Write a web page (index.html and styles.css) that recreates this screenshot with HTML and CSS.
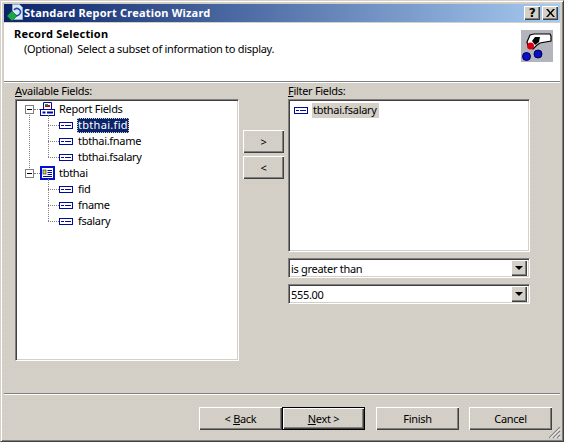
FILE: index.html
```html
<!DOCTYPE html>
<html lang="en">
<head>
<meta charset="utf-8">
<title>Standard Report Creation Wizard</title>
<link rel="stylesheet" href="styles.css">
</head>
<body>
<svg class="defs" width="0" height="0" aria-hidden="true">
  <symbol id="field" viewBox="0 0 14 7">
    <rect x="0" y="0" width="14" height="7" fill="#000a9c"/>
    <rect x="1" y="1" width="12" height="5" fill="#fff"/>
    <rect x="2" y="3" width="3" height="1" fill="#000a9c"/>
    <rect x="6" y="3" width="6" height="1" fill="#000a9c"/>
  </symbol>
</svg>
<div class="window">
  <div class="titlebar">
    <svg class="app-icon" width="18" height="18" viewBox="0 0 18 18">
      <path d="M6.500.5h7l3 3v12h-10z" fill="#dce8f8" stroke="#90a8c8"/>
      <path d="M8 6a3.500 3.500 0 1 1 1 5" fill="none" stroke="#1848a8" stroke-width="1.500"/>
      <path d="M1 12l5-5 5 5-5 5z" fill="#18a848" stroke="#0a6028" stroke-width=".6"/>
    </svg>
    <span class="title-text">Standard Report Creation Wizard</span>
    <span class="caption-btn help">?</span>
    <span class="caption-btn close">
      <svg width="9" height="8" viewBox="0 0 9 8"><path d="M0 0h2l2.500 3L7 0h2L5.500 4 9 8H7L4.500 5 2 8H0l3.500-4z" fill="#000"/></svg>
    </span>
  </div>
  <div class="header">
    <div class="header-text">
      <h1>Record Selection</h1>
      <p>(Optional)&nbsp; Select a subset of information to display.</p>
    </div>
    <svg class="wizard-icon" width="32" height="32" viewBox="0 0 32 32">
      <rect width="32" height="32" fill="#b4b4bc"/>
      <path d="M6 12l3-7 4-1h16l1 2v5l-11 2-3 2-4 4-5-3z" fill="#fff" stroke="#000" stroke-width="1.200"/>
      <path d="M11 11l3-4h5l-1 5-4 3z" fill="#000"/>
      <circle cx="9.500" cy="16" r="3.500" fill="#d80010"/>
      <circle cx="5.500" cy="26.500" r="4" fill="#0810c8" stroke="#000050"/>
      <circle cx="17" cy="24" r="4" fill="#0810c8" stroke="#000050"/>
    </svg>
  </div>
  <div class="rule"></div>
  <div class="main">
    <section class="col-left">
      <label class="field-label"><u>A</u>vailable Fields:</label>
      <div class="sunken tree">
        <div class="node">
          <div class="row root"><span class="exp"></span><span class="stub"></span>
            <svg class="root-icon" width="15" height="14" viewBox="0 0 15 14">
              <path d="M3.500.5h8v7h-8z" fill="#fff" stroke="#000a9c"/>
              <path d="M5 3h5v2H5z" fill="#d00010"/><path d="M5 2h3v1.500H5z" fill="#18a040"/>
              <rect x=".5" y="7.500" width="14" height="6" fill="#fff" stroke="#000a9c"/>
              <rect x="2.500" y="9.500" width="3" height="2" fill="#000a9c"/><rect x="7" y="9.500" width="6" height="2" fill="#000a9c"/>
            </svg>
            <span class="txt">Report Fields</span></div>
          <div class="kids">
            <div class="row"><span class="elbow"></span><svg class="fld"><use href="#field"/></svg><span class="txt sel">tbthai.fid</span></div>
            <div class="row"><span class="elbow"></span><svg class="fld"><use href="#field"/></svg><span class="txt">tbthai.fname</span></div>
            <div class="row"><span class="elbow"></span><svg class="fld"><use href="#field"/></svg><span class="txt">tbthai.fsalary</span></div>
          </div>
        </div>
        <div class="node">
          <div class="row root"><span class="exp"></span><span class="stub"></span>
            <svg class="root-icon" width="15" height="14" viewBox="0 0 15 14">
              <rect x="1" y="1" width="13" height="12" fill="#fff" stroke="#0010d0" stroke-width="2"/>
              <rect x="3" y="4" width="3" height="4" fill="#f0d800" stroke="#000a9c" stroke-width=".6"/>
              <path d="M7.500 4.500h4.500M7.500 6.500h4.500M7.500 8.500h4.500M3 10.500h9" stroke="#000a9c"/>
            </svg>
            <span class="txt">tbthai</span></div>
          <div class="kids">
            <div class="row"><span class="elbow"></span><svg class="fld"><use href="#field"/></svg><span class="txt">fid</span></div>
            <div class="row"><span class="elbow"></span><svg class="fld"><use href="#field"/></svg><span class="txt">fname</span></div>
            <div class="row"><span class="elbow"></span><svg class="fld"><use href="#field"/></svg><span class="txt">fsalary</span></div>
          </div>
        </div>
      </div>
    </section>
    <div class="col-mid">
      <button class="btn move" type="button">&gt;</button>
      <button class="btn move" type="button">&lt;</button>
    </div>
    <section class="col-right">
      <label class="field-label"><u>F</u>ilter Fields:</label>
      <div class="sunken filter">
        <div class="row"><svg class="fld"><use href="#field"/></svg><span class="txt picked">tbthai.fsalary</span></div>
      </div>
      <div class="sunken combo"><span>is greater than</span><span class="arrow"></span></div>
      <div class="sunken combo"><span>555.00</span><span class="arrow"></span></div>
    </section>
  </div>
  <div class="rule"></div>
  <div class="footer">
    <button class="btn foot" type="button">&lt; <u>B</u>ack</button>
    <button class="btn foot default" type="button"><u>N</u>ext &gt;</button>
    <button class="btn foot finish" type="button">Finish</button>
    <button class="btn foot cancel" type="button">Cancel</button>
  </div>
  <svg class="grip" width="12" height="12" viewBox="0 0 12 12">
    <path d="M11 0L0 11M11 4L4 11M11 8L8 11" stroke="#808080" stroke-width="1.200"/>
    <path d="M11 1.500L1.500 11M11 5.500L5.500 11M11 9.500L9.500 11" stroke="#fff"/>
  </svg>
</div>
</body>
</html>
```
FILE: styles.css
```css
* { box-sizing: border-box; }
html, body { margin: 0; padding: 0; }
body { width: 564px; height: 442px; overflow: hidden; font: 11px/13px "Noto Sans", sans-serif; letter-spacing: -0.3px; color: #000; }
.defs { display: block; height: 0; }
.window {
  position: relative;
  width: 564px; height: 442px;
  display: flex; flex-direction: column;
  padding: 3px 3px 2px 3px;
  border: 1px solid; border-color: #d4d0c8 #404040 #404040 #d4d0c8;
  box-shadow: inset 1px 1px #fff, inset -1px -1px #808080;
  background-color: #d4d0c8;
  background-image: conic-gradient(at 1px 1px, transparent 75%, #cdc9c1 0), conic-gradient(at 1px 1px, transparent 75%, #cdc9c1 0);
  background-size: 4px 4px;
  background-position: 0 0, 2px 2px;
}
.titlebar {
  height: 18px; flex: none;
  display: flex; align-items: center;
  padding: 0 2px 0 2px;
  background: linear-gradient(90deg, #0a246a, #a6caf0);
  color: #fff; font-weight: 700;
}
.app-icon { flex: none; margin-right: 0; }
.title-text { flex: 1; padding-bottom: 2px; font-size: 11px; letter-spacing: 0.2px; white-space: nowrap; }
.caption-btn {
  width: 16px; height: 14px; flex: none;
  display: flex; align-items: center; justify-content: center;
  background: #d4d0c8; color: #000; font: 700 12px/14px "DejaVu Sans", sans-serif;
  box-shadow: inset 1px 1px #fff, inset -1px -1px #404040, inset -2px -2px #808080;
}
.help { margin-right: 2px; }
.header {
  height: 58px; flex: none; margin-top: 1px;
  background: #fff;
  display: flex; justify-content: space-between; align-items: flex-start;
  padding: 3px 7px 0 10px;
}
h1 { margin: 0; font: 700 11px/15px "Noto Sans", sans-serif; letter-spacing: 0.2px; }
.header p { margin: 0 0 0 10px; line-height: 15px; }
.wizard-icon { margin-top: 4px; }
.rule { height: 2px; flex: none; background: #808080; border-bottom: 1px solid #fff; }
.main {
  flex: 1; min-height: 0;
  display: flex;
  padding: 0 0 32px 11px;
}
.col-left { width: 224px; flex: none; display: flex; flex-direction: column; }
.col-mid { width: 49px; flex: none; padding: 47px 0 0 4px; display: flex; flex-direction: column; gap: 3px; }
.col-right { width: 242px; flex: none; display: flex; flex-direction: column; }
.field-label { height: 16px; flex: none; line-height: 15px; }
.sunken {
  background: #fff;
  border: 1px solid; border-color: #808080 #fff #fff #808080;
  box-shadow: inset 1px 1px #404040, inset -1px -1px #d4d0c8;
}
.tree { flex: 1; padding: 1px 0 0 9px; }
.filter { height: 153px; flex: none; padding: 2px 0 0 5px; }
.row { height: 16px; display: flex; align-items: center; white-space: nowrap; }
.node { position: relative; }
.node::before { content: ""; position: absolute; left: 4px; top: 12px; bottom: -3px; border-left: 1px dotted #808080; }
.node:last-child::before { display: none; }
.exp {
  position: relative; z-index: 1;
  width: 9px; height: 9px; flex: none;
  border: 1px solid #808080; background: #fff;
}
.exp::after { content: ""; position: absolute; left: 1px; top: 3px; width: 5px; height: 1px; background: #000; }
.stub { width: 6px; flex: none; border-top: 1px dotted #808080; }
.root-icon { flex: none; margin-right: 3px; }
.kids { position: relative; padding-left: 23px; }
.kids::before { content: ""; position: absolute; left: 23px; top: -2px; bottom: 8px; border-left: 1px dotted #808080; }
.elbow { width: 11px; flex: none; border-top: 1px dotted #808080; }
.fld { width: 14px; height: 7px; flex: none; margin-right: 4px; }
.txt { padding: 0 1px 2px; }
.sel { background: #0a246a; color: #fff; letter-spacing: 0.3px; outline: 1px dotted #d4d0c8; outline-offset: -1px; }
.picked { background: #d4d0c8; padding-right: 2px; }
.combo {
  height: 20px; flex: none; margin-top: 6px;
  display: flex; align-items: center; justify-content: space-between;
  padding: 0 2px 0 2px;
}
.arrow {
  position: relative;
  width: 16px; height: 16px; flex: none;
  background: #d4d0c8;
  box-shadow: inset 1px 1px #fff, inset -1px -1px #404040, inset -2px -2px #808080;
}
.arrow::after {
  content: ""; position: absolute; left: 4px; top: 6px;
  border: 4px solid transparent; border-top-color: #000; border-bottom: 0;
}
.btn {
  padding: 0; margin: 0; border: 0; border-radius: 0;
  font: 11px/13px "Noto Sans", sans-serif; letter-spacing: -0.3px; color: #000;
  background: transparent;
  box-shadow: inset 1px 1px #fff, inset -1px -1px #404040, inset -2px -2px #808080;
}
.move { width: 41px; height: 23px; }
.footer {
  height: 44px; flex: none;
  display: flex; align-items: flex-start;
  padding: 12px 0 0 195px;
}
.foot { width: 83px; height: 23px; }
.default { border: 1px solid #000; }
.finish { margin-left: 11px; }
.cancel { margin-left: 10px; }
.grip { position: absolute; right: 2px; bottom: 2px; }
```
